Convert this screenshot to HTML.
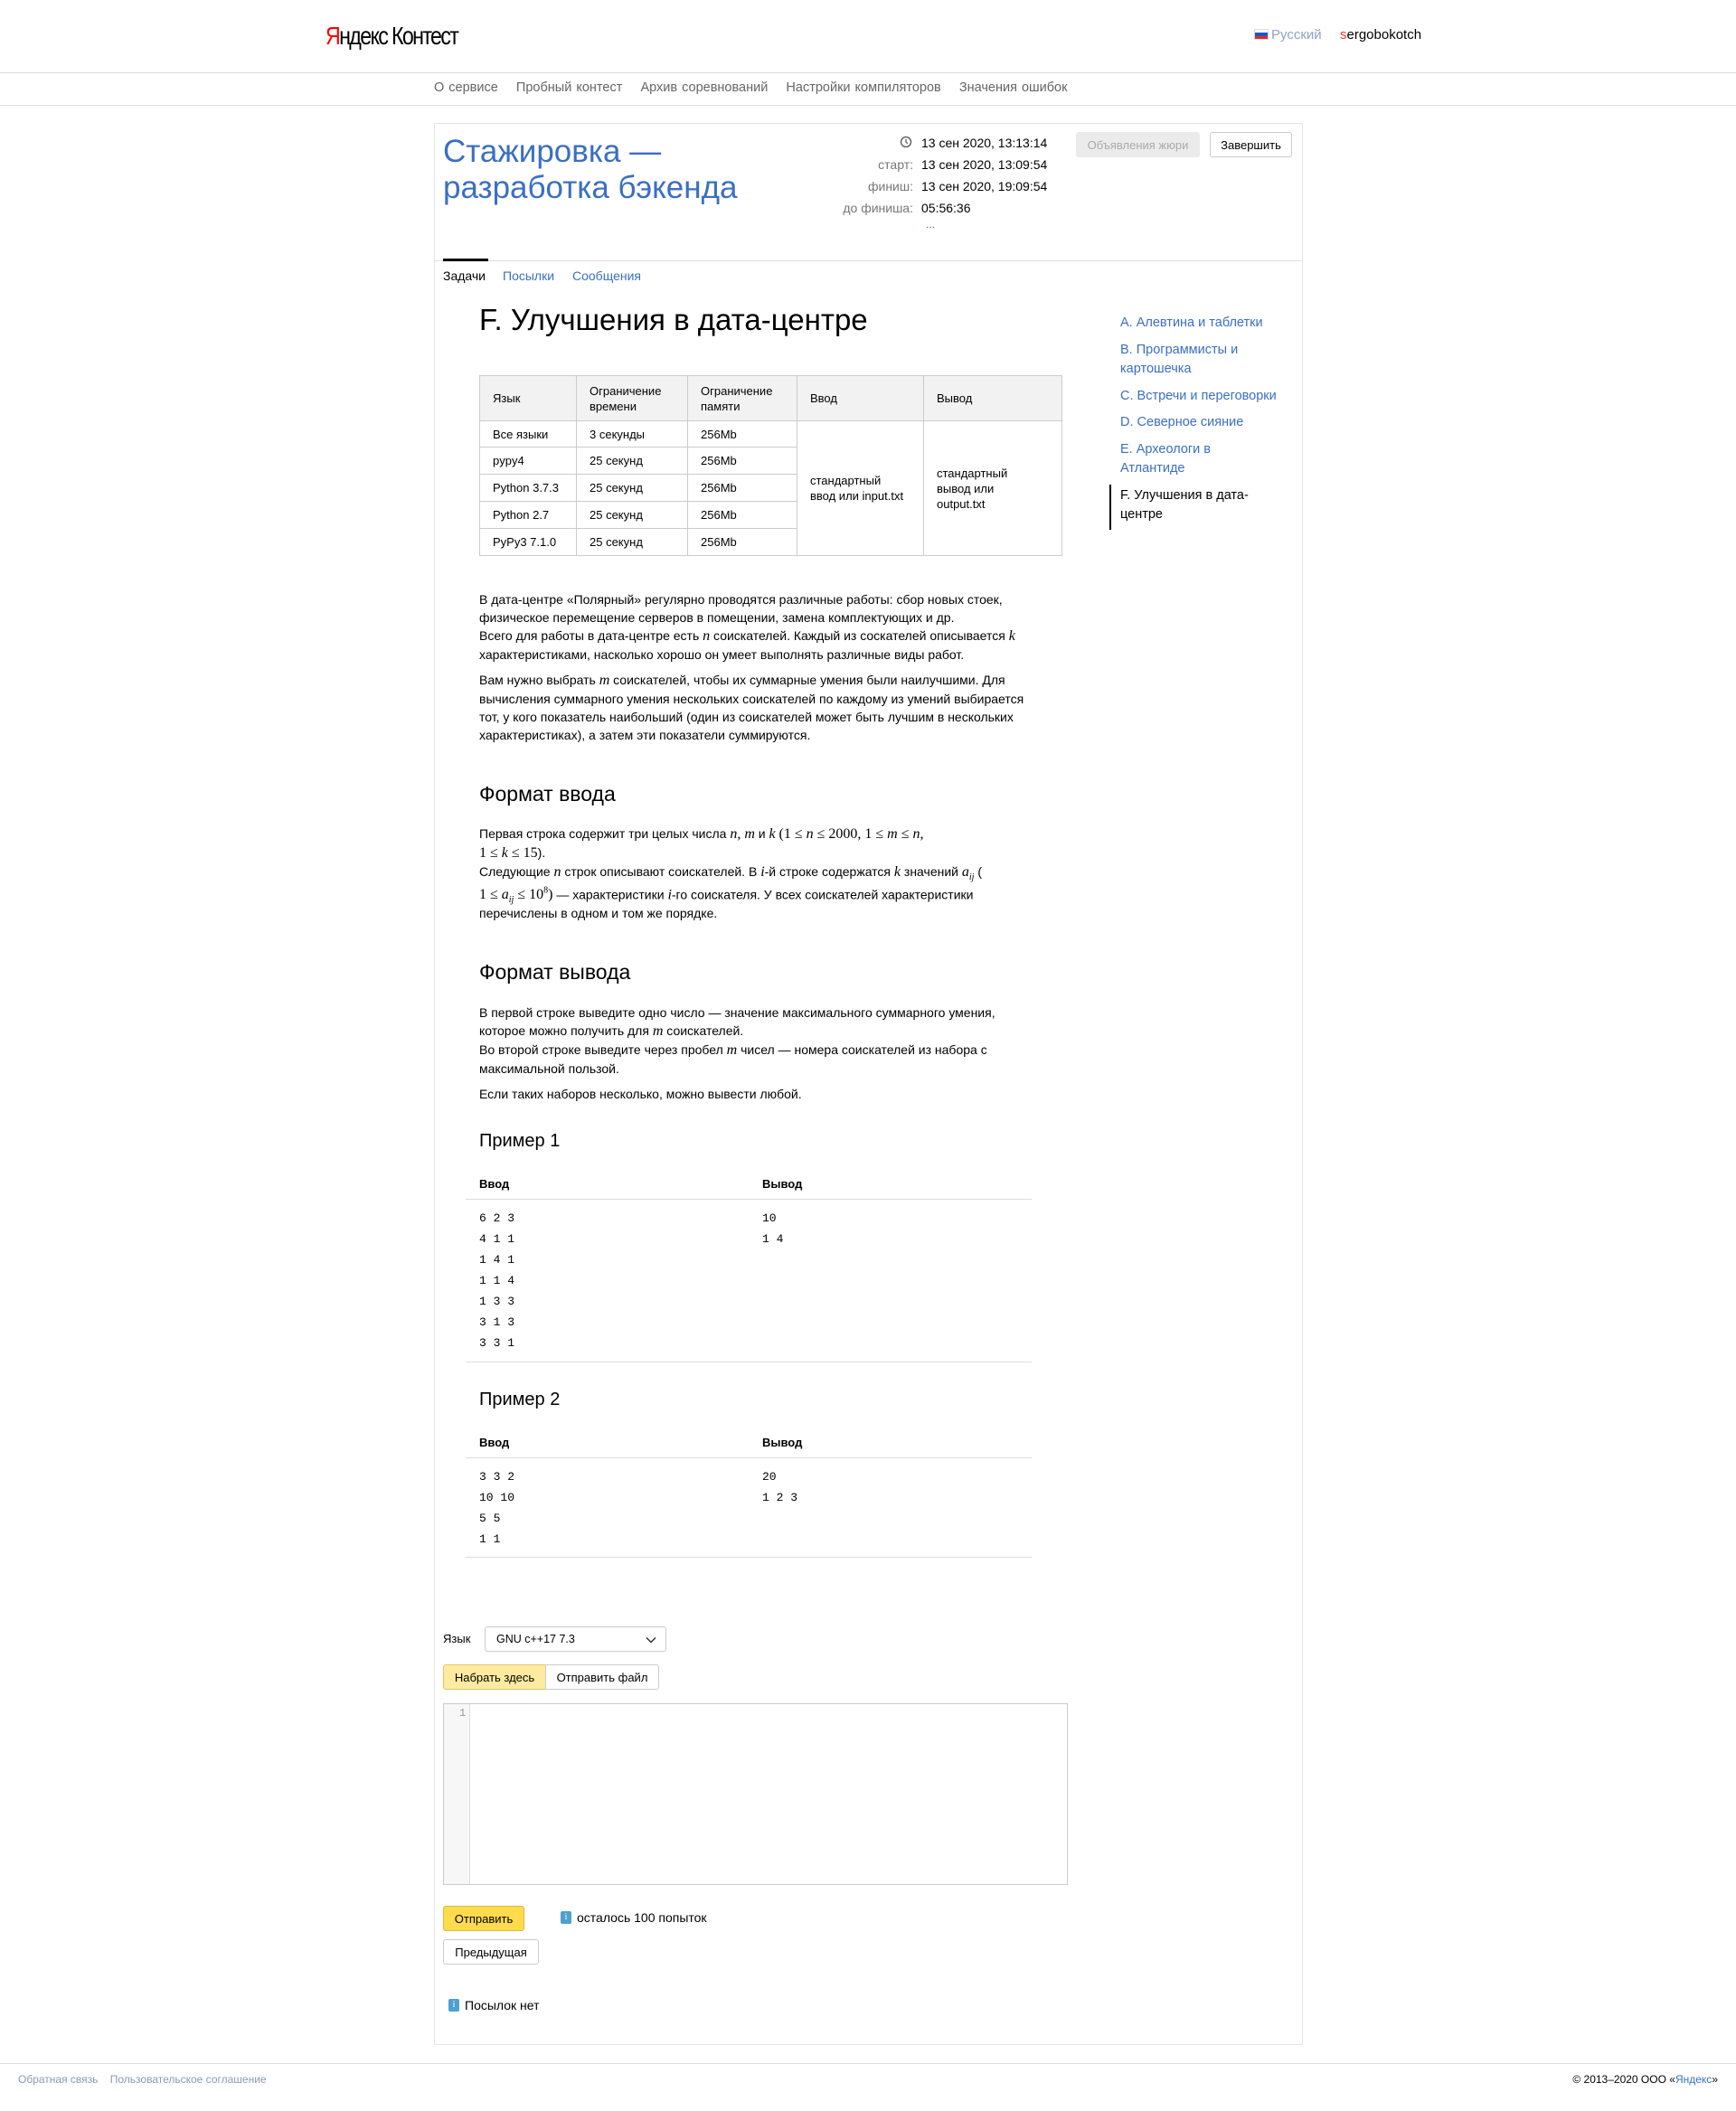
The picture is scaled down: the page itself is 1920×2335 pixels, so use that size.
<!DOCTYPE html>
<html><head><meta charset="utf-8">
<style>
*{margin:0;padding:0;box-sizing:border-box}
body{width:1920px;height:2335px;position:relative;background:#fff;font-family:"Liberation Sans","Noto Sans CJK SC",sans-serif;font-size:13px;color:#000;overflow:hidden}
.a{position:absolute;white-space:nowrap}
.blue{color:#3a6fc4}
.m{font-family:"Liberation Serif",serif;font-style:italic;font-size:16px}
.mr{font-family:"Liberation Serif",serif;font-size:16px}
.hl{position:absolute;height:1px;background:#ddd}
table{position:absolute;border-collapse:collapse;font-size:13px}
td,th{border:1px solid #ccc;padding:0 14px;text-align:left;font-weight:normal;vertical-align:middle;line-height:17px}
th{background:#f2f2f2}
.code{font-family:"Liberation Mono","DejaVu Sans Mono",monospace;font-size:13px;line-height:23px;position:absolute;white-space:pre}
.btn{position:absolute;border:1px solid #ccc;border-radius:3px;background:#fff;font-size:13px;display:flex;align-items:center;justify-content:center}
.info{display:inline-block;position:relative;top:-1px;width:12px;height:14px;background:#4f9fcf;color:#fff;font-size:10px;line-height:14px;text-align:center;border-radius:2px;vertical-align:middle;margin-right:6px;font-family:"Liberation Serif",serif}
.p{font-size:14px;line-height:20px}
</style></head><body>

<!-- header -->
<div class="a" style="left:360px;top:24px;font-size:28px;letter-spacing:-2px;transform:scaleX(0.83);transform-origin:left"><span style="color:#f00">Я</span>ндекс <span style="font-weight:normal">Контест</span></div>
<div class="a" style="left:1387px;top:32px;width:16px;height:12px;border:1px solid #ddd">
 <div style="height:33%;background:#fff"></div><div style="height:34%;background:#1c57c7"></div><div style="height:33%;background:#e52b25"></div></div>
<div class="a" style="left:1406px;top:30px;font-size:15px;color:#8ea3c8">Русский</div>
<div class="a" style="left:1482px;top:30px;font-size:15px"><span style="color:#f33">s</span>ergobokotch</div>
<div class="hl" style="left:0;top:80px;width:1920px;background:#ddd"></div>
<div class="a" style="left:480px;top:89px;font-size:14.5px;color:#666;word-spacing:1px">О сервисе&nbsp;&nbsp;&nbsp; Пробный контест&nbsp;&nbsp;&nbsp; Архив соревнований&nbsp;&nbsp;&nbsp; Настройки компиляторов&nbsp;&nbsp;&nbsp; Значения ошибок</div>
<div class="hl" style="left:0;top:116px;width:1920px"></div>

<!-- main box -->
<div class="a" style="left:480px;top:136px;width:961px;height:2126px;border:1px solid #e4e4e4"></div>
<div class="a blue" style="left:490px;top:148px;font-size:35px;line-height:40px">Стажировка —<br>разработка бэкенда</div>

<div class="a" style="left:990px;top:148px;width:20px;font-size:13px;color:#666">
<svg width="14" height="14" viewBox="0 0 14 14" style="position:absolute;left:5px;top:2px"><circle cx="7" cy="7" r="5.5" fill="none" stroke="#555" stroke-width="1.3"/><path d="M7 3.8V7.2L9 8.6" fill="none" stroke="#555" stroke-width="1.2"/></svg></div>
<div class="a" style="left:900px;top:146px;width:110px;text-align:right;color:#777;line-height:24px;font-size:14px"><br>старт:<br>финиш:<br>до финиша:</div>
<div class="a" style="left:1019px;top:146px;line-height:24px;font-size:14px">13 сен 2020, 13:13:14<br>13 сен 2020, 13:09:54<br>13 сен 2020, 19:09:54<br>05:56:36</div>
<div class="a blue" style="left:1024px;top:241px;font-size:12px">...</div>
<div class="btn" style="left:1190px;top:146px;width:137px;height:28px;background:#ebebeb;border-color:#ebebeb;color:#aaa">Объявления жюри</div>
<div class="btn" style="left:1338px;top:146px;width:91px;height:28px">Завершить</div>

<div class="hl" style="left:481px;top:288px;width:958px;background:#ddd"></div>
<div class="a" style="left:490px;top:286px;width:50px;height:3px;background:#000"></div>
<div class="a" style="left:490px;top:297px;font-size:14px">Задачи</div>
<div class="a blue" style="left:556px;top:297px;font-size:14px">Посылки</div>
<div class="a blue" style="left:633px;top:297px;font-size:14px">Сообщения</div>

<!-- sidebar -->
<div class="a blue" style="left:1239px;top:347px;font-size:14.5px;line-height:21.5px">
A. Алевтина и таблетки<br><div style="height:8px"></div>
B. Программисты и<br>картошечка<br><div style="height:8px"></div>
C. Встречи и переговорки<br><div style="height:8px"></div>
D. Северное сияние<br><div style="height:8px"></div>
E. Археологи в<br>Атлантиде<br><div style="height:8px"></div>
<span style="color:#000">F. Улучшения в дата-<br>центре</span></div>
<div class="a" style="left:1227px;top:536px;width:2px;height:50px;background:#000"></div>

<!-- problem -->
<div class="a" style="left:530px;top:335px;font-size:33px">F. Улучшения в дата-центре</div>

<table style="left:530px;top:415px;width:645px">
<tr style="height:50px"><th style="width:107px">Язык</th><th style="width:123px">Ограничение<br>времени</th><th style="width:121px">Ограничение<br>памяти</th><th style="width:140px">Ввод</th><th>Вывод</th></tr>
<tr style="height:29px"><td>Все языки</td><td>3 секунды</td><td>256Mb</td><td rowspan="5">стандартный<br>ввод или input.txt</td><td rowspan="5">стандартный<br>вывод или<br>output.txt</td></tr>
<tr style="height:30px"><td>pypy4</td><td>25 секунд</td><td>256Mb</td></tr>
<tr style="height:30px"><td>Python 3.7.3</td><td>25 секунд</td><td>256Mb</td></tr>
<tr style="height:30px"><td>Python 2.7</td><td>25 секунд</td><td>256Mb</td></tr>
<tr style="height:30px"><td>PyPy3 7.1.0</td><td>25 секунд</td><td>256Mb</td></tr>
</table>

<div class="a p" style="left:530px;top:653px">В дата-центре «Полярный» регулярно проводятся различные работы: сбор новых стоек,<br>физическое перемещение серверов в помещении, замена комплектующих и др.<br>Всего для работы в дата-центре есть <span class="m">n</span> соискателей. Каждый из соскателей описывается <span class="m">k</span><br>характеристиками, насколько хорошо он умеет выполнять различные виды работ.</div>
<div class="a p" style="left:530px;top:742px">Вам нужно выбрать <span class="m">m</span> соискателей, чтобы их суммарные умения были наилучшими. Для<br>вычисления суммарного умения нескольких соискателей по каждому из умений выбирается<br>тот, у кого показатель наибольший (один из соискателей может быть лучшим в нескольких<br>характеристиках), а затем эти показатели суммируются.</div>

<div class="a" style="left:530px;top:865px;font-size:23px">Формат ввода</div>
<div class="a p" style="left:530px;top:912px">Первая строка содержит три целых числа <span class="m">n</span><span class="mr">, </span><span class="m">m</span> и <span class="m">k</span> <span class="mr">(1 ≤ <i>n</i> ≤ 2000, 1 ≤ <i>m</i> ≤ <i>n</i>,</span><br><span class="mr">1 ≤ <i>k</i> ≤ 15</span>).<br>Следующие <span class="m">n</span> строк описывают соискателей. В <span class="m">i</span>-й строке содержатся <span class="m">k</span> значений <span class="m">a<sub style="font-size:10px">ij</sub></span> (</div>
<div class="a p" style="left:530px;top:975px;line-height:22px"><span class="mr">1 ≤ <i>a<sub style="font-size:10px">ij</sub></i> ≤ 10<sup style="font-size:10px">8</sup>)</span> — характеристики <span class="m">i</span>-го соискателя. У всех соискателей характеристики</div>
<div class="a p" style="left:530px;top:1000px">перечислены в одном и том же порядке.</div>

<div class="a" style="left:530px;top:1062px;font-size:23px">Формат вывода</div>
<div class="a p" style="left:530px;top:1110px">В первой строке выведите одно число — значение максимального суммарного умения,<br>которое можно получить для <span class="m">m</span> соискателей.<br>Во второй строке выведите через пробел <span class="m">m</span> чисел — номера соискателей из набора с<br>максимальной пользой.</div>
<div class="a p" style="left:530px;top:1200px">Если таких наборов несколько, можно вывести любой.</div>

<div class="a" style="left:530px;top:1251px;font-size:20px">Пример 1</div>
<div class="a" style="left:530px;top:1302px;font-weight:bold">Ввод</div>
<div class="a" style="left:843px;top:1302px;font-weight:bold">Вывод</div>
<div class="hl" style="left:515px;top:1326px;width:626px"></div>
<div class="code" style="left:530px;top:1336px">6 2 3
4 1 1
1 4 1
1 1 4
1 3 3
3 1 3
3 3 1</div>
<div class="code" style="left:843px;top:1336px">10
1 4</div>
<div class="hl" style="left:515px;top:1506px;width:626px"></div>

<div class="a" style="left:530px;top:1537px;font-size:20px">Пример 2</div>
<div class="a" style="left:530px;top:1588px;font-weight:bold">Ввод</div>
<div class="a" style="left:843px;top:1588px;font-weight:bold">Вывод</div>
<div class="hl" style="left:515px;top:1612px;width:626px"></div>
<div class="code" style="left:530px;top:1622px">3 3 2
10 10
5 5
1 1</div>
<div class="code" style="left:843px;top:1622px">20
1 2 3</div>
<div class="hl" style="left:515px;top:1722px;width:626px"></div>

<!-- submit -->
<div class="a" style="left:490px;top:1805px">Язык</div>
<div class="btn" style="left:536px;top:1799px;width:201px;height:28px;justify-content:flex-start;padding-left:12px;font-size:12.5px">GNU c++17 7.3
<svg width="12" height="8" viewBox="0 0 12 8" style="position:absolute;right:10px;top:10px"><path d="M1 1.5L6 6.5L11 1.5" fill="none" stroke="#333" stroke-width="1.5"/></svg></div>
<div class="btn" style="left:490px;top:1841px;width:114px;height:28px;background:#ffeba0;border-color:#e2c56c;border-radius:3px 0 0 3px">Набрать здесь</div>
<div class="btn" style="left:603px;top:1841px;width:126px;height:28px;border-radius:0 3px 3px 0">Отправить файл</div>
<div class="a" style="left:490px;top:1884px;width:691px;height:201px;border:1px solid #ccc"></div>
<div class="a" style="left:491px;top:1885px;width:29px;height:199px;background:#f7f7f7;border-right:1px solid #ddd"></div>
<div class="a" style="left:508px;top:1888px;color:#999;font-family:'Liberation Mono',monospace;font-size:12px">1</div>

<div class="btn" style="left:490px;top:2108px;width:90px;height:28px;background:#ffdb4d;border-color:#e0b93a">Отправить</div>
<div class="a" style="left:620px;top:2113px;font-size:14px"><span class="info">i</span>осталось 100 попыток</div>
<div class="btn" style="left:490px;top:2145px;width:106px;height:28px">Предыдущая</div>
<div class="a" style="left:496px;top:2210px;font-size:14px"><span class="info">i</span>Посылок нет</div>

<!-- footer -->
<div class="hl" style="left:0;top:2282px;width:1920px"></div>
<div class="a" style="left:20px;top:2293px;font-size:12px;color:#8a9bb5">Обратная связь&nbsp;&nbsp;&nbsp; Пользовательское соглашение</div>
<div class="a" style="right:20px;top:2293px;font-size:12px">© 2013–2020 ООО «<span class="blue">Яндекс</span>»</div>
</body></html>
